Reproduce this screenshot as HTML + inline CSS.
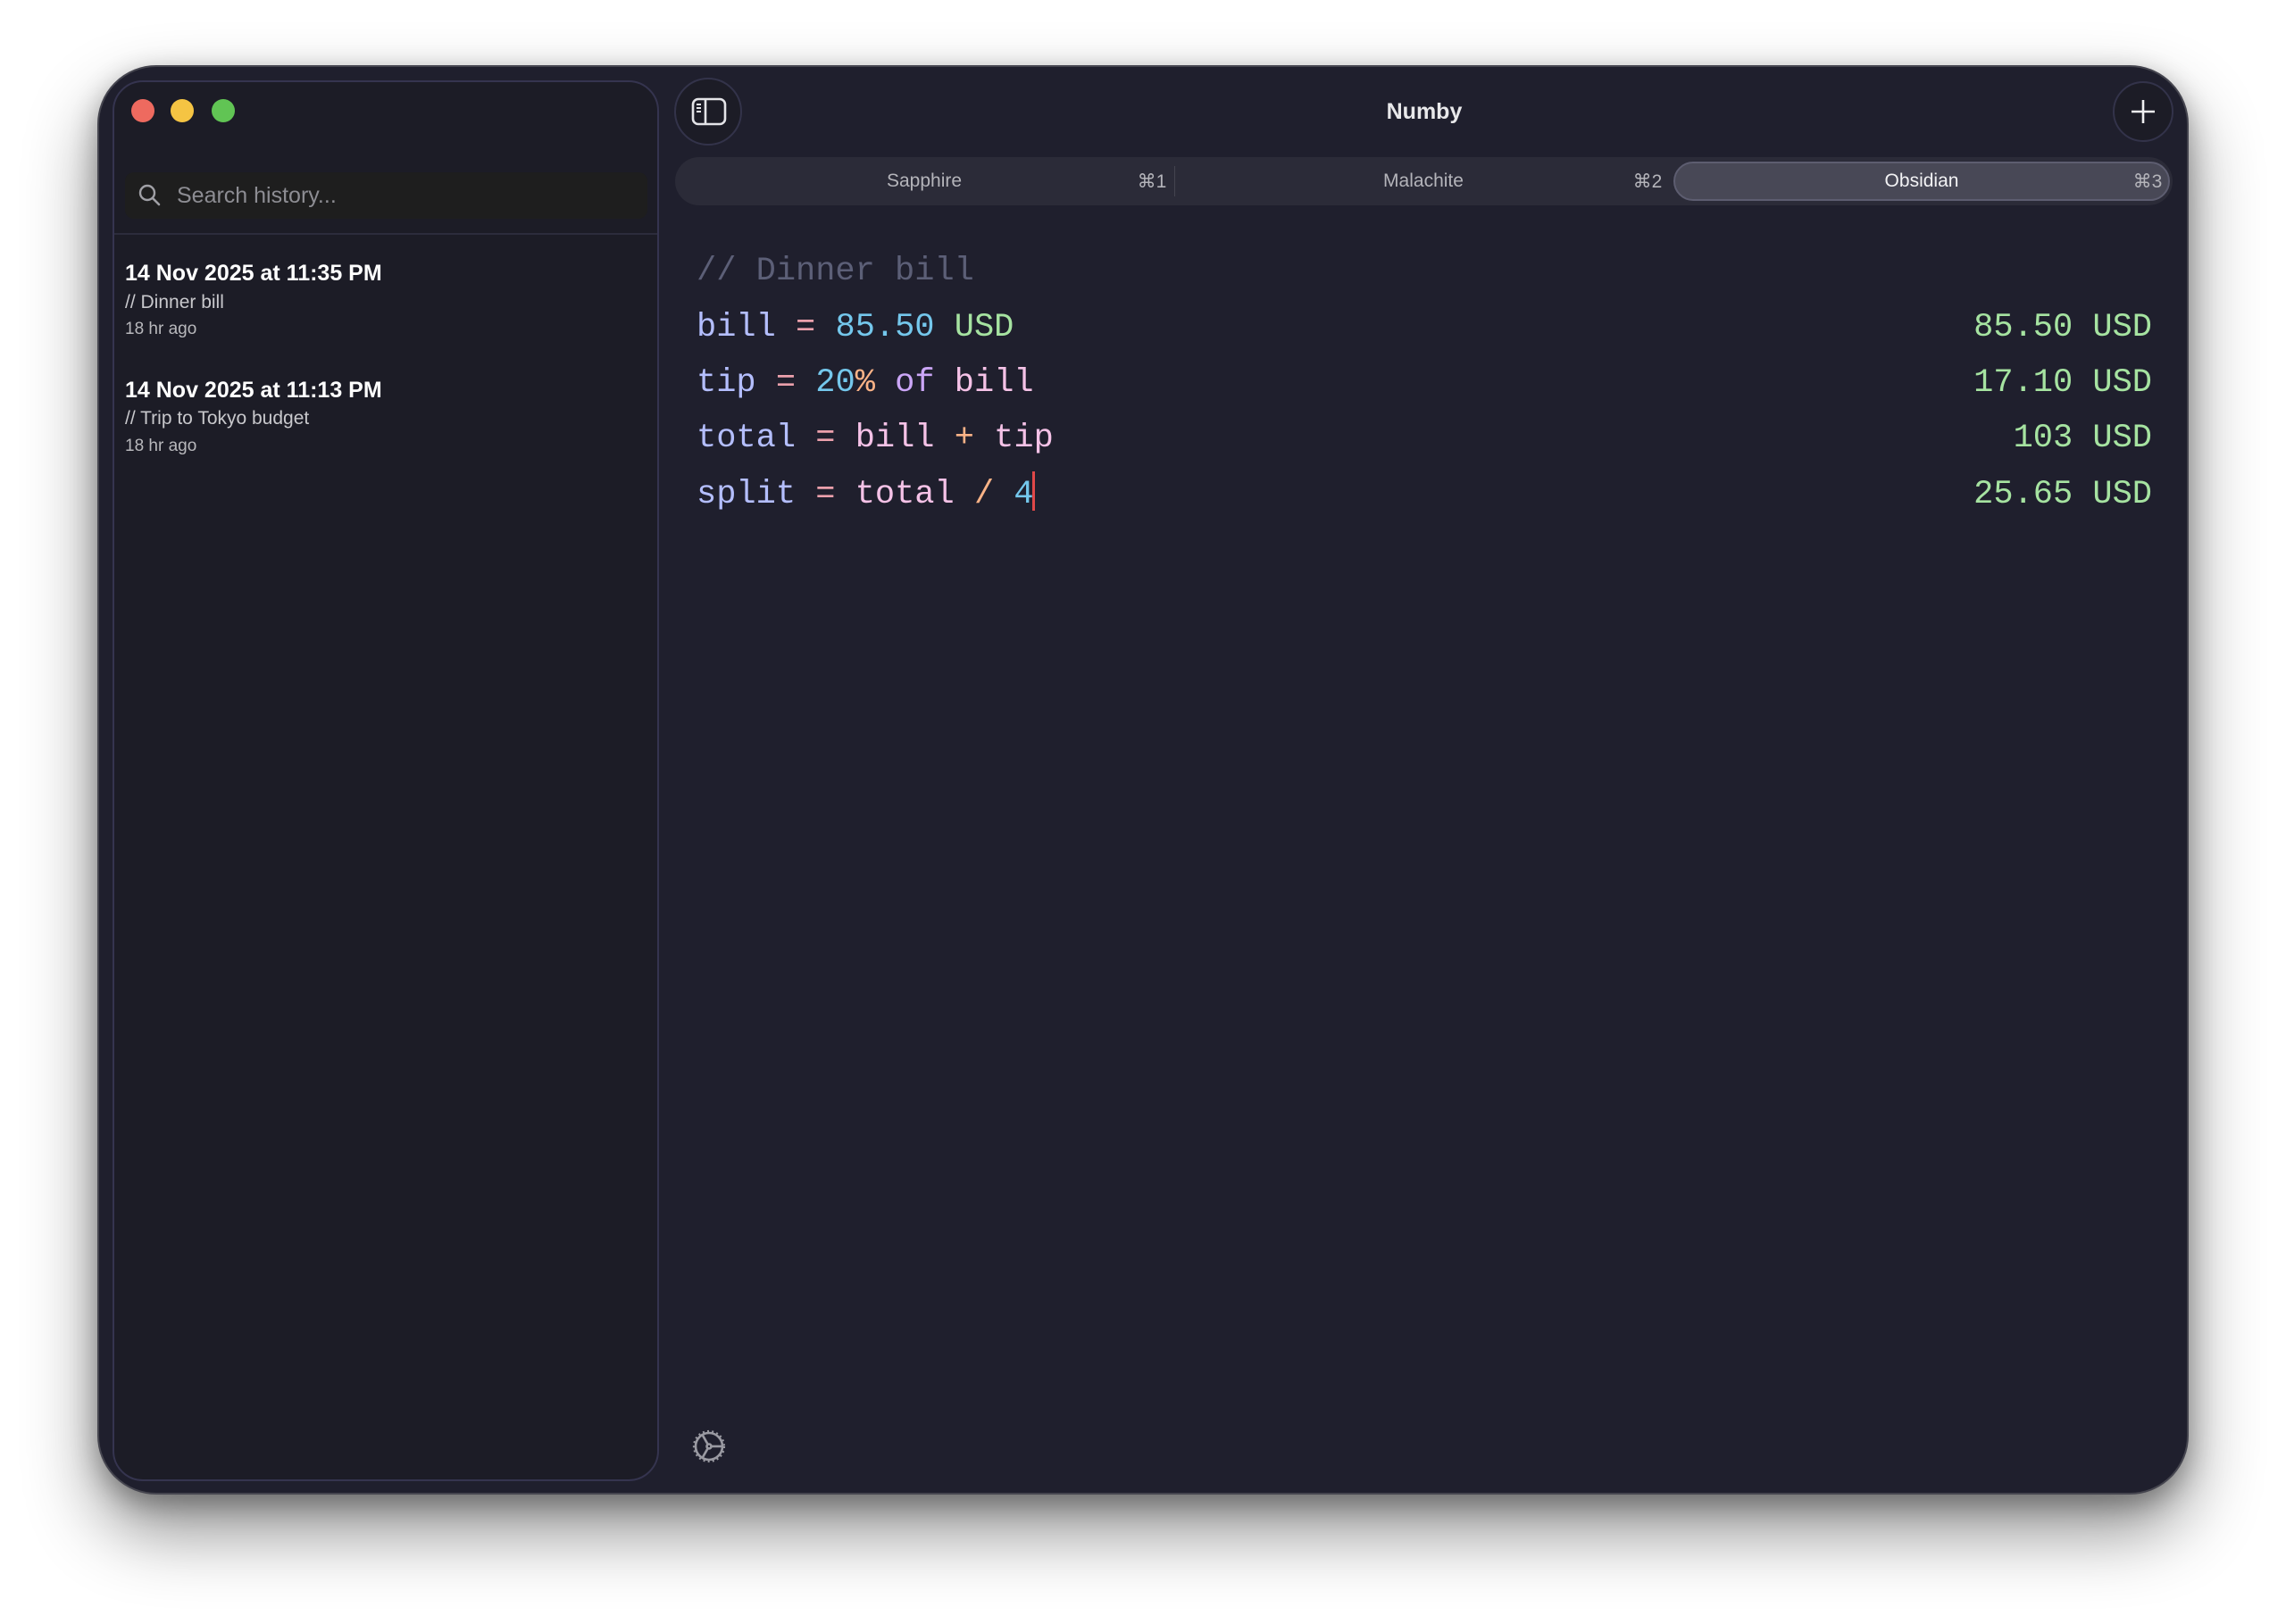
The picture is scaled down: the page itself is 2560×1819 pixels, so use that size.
<!DOCTYPE html>
<html><head><meta charset="utf-8"><style>
*{margin:0;padding:0;box-sizing:border-box}
body{width:2560px;height:1819px;background:#fff;position:relative;overflow:hidden;font-family:"Liberation Sans",sans-serif}
.win{position:absolute;left:109px;top:73px;width:2342px;height:1601px;border-radius:66px;background:#1f1f2d;border:2px solid #45454f;box-shadow:0 40px 80px rgba(0,0,0,.45),0 10px 30px rgba(0,0,0,.3)}
.side{position:absolute;left:126px;top:90px;width:612px;height:1569px;border-radius:34px;background:#1c1c26;border:2px solid #35344f}
.dot{position:absolute;top:111px;width:26px;height:26px;border-radius:50%}
.search{position:absolute;left:140px;top:193px;width:585px;height:52px;border-radius:10px;background:#1e1e1e}
.search span{position:absolute;left:58px;top:12px;font-size:25px;color:#8d8d93}
.hr{position:absolute;left:128px;top:261px;width:608px;height:2px;background:#2c2c3c}
.t{position:absolute;left:140px;color:#fff;font-weight:bold;font-size:25px}
.s{position:absolute;left:140px;color:#c8c8cc;font-size:21px}
.a{position:absolute;left:140px;color:#b8b8bc;font-size:19px}
.circ{position:absolute;border-radius:50%;background:#1c1c26;border:2px solid #33334a}
.title{position:absolute;left:1495px;width:200px;top:111px;text-align:center;color:#e8e8ea;font-size:25px;font-weight:bold}
.tabs{position:absolute;left:756px;top:176px;width:1677px;height:54px;border-radius:27px;background:#2b2b38}
.act{position:absolute;left:1874px;top:181px;width:556px;height:44px;border-radius:22px;background:#484856;border:2px solid #5d5d70}
.tl{position:absolute;top:191px;font-size:21px;color:#b4b4ba;transform:translateX(-50%)}
.code{position:absolute;left:780px;font-family:"Liberation Mono",monospace;font-size:37px;white-space:pre;line-height:1}
.r{position:absolute;right:150px;font-family:"Liberation Mono",monospace;font-size:37px;color:#a6e3a1;white-space:pre;line-height:1}
.v{color:#b4befe}.e{color:#eba0ac}.n{color:#74c7ec}.g{color:#a6e3a1}.o{color:#fab387}.m{color:#cba6f7}.p{color:#f5c2e7}.c{color:#5c5f77}
</style></head><body>
<div class="win"></div>
<div class="side"></div>
<div class="dot" style="left:147px;background:#ee6a5f"></div>
<div class="dot" style="left:191px;background:#f5c443"></div>
<div class="dot" style="left:237px;background:#61c454"></div>
<div class="search"><svg style="position:absolute;left:14px;top:12px" width="28" height="28" viewBox="0 0 28 28"><circle cx="11" cy="11" r="8" fill="none" stroke="#a0a0a6" stroke-width="2.4"/><line x1="17" y1="17" x2="24" y2="24" stroke="#a0a0a6" stroke-width="2.6" stroke-linecap="round"/></svg><span>Search history...</span></div>
<div class="hr"></div>
<div class="t" style="top:292px">14 Nov 2025 at 11:35 PM</div>
<div class="s" style="top:327px">// Dinner bill</div>
<div class="a" style="top:358px">18 hr ago</div>
<div class="t" style="top:423px">14 Nov 2025 at 11:13 PM</div>
<div class="s" style="top:457px">// Trip to Tokyo budget</div>
<div class="a" style="top:489px">18 hr ago</div>

<div class="circ" style="left:755px;top:87px;width:76px;height:76px"></div>
<svg style="position:absolute;left:774px;top:109px" width="40" height="32" viewBox="0 0 40 32"><rect x="2" y="2" width="36" height="28" rx="6" fill="none" stroke="#e4e4e8" stroke-width="2.6"/><line x1="16" y1="2" x2="16" y2="30" stroke="#e4e4e8" stroke-width="2.6"/><line x1="6" y1="8" x2="11" y2="8" stroke="#e4e4e8" stroke-width="2"/><line x1="6" y1="12" x2="11" y2="12" stroke="#e4e4e8" stroke-width="2"/><line x1="6" y1="16" x2="11" y2="16" stroke="#e4e4e8" stroke-width="2"/></svg>
<div class="title">Numby</div>
<div class="circ" style="left:2366px;top:91px;width:68px;height:68px"></div>
<svg style="position:absolute;left:2386px;top:111px" width="28" height="28" viewBox="0 0 28 28"><line x1="14" y1="1" x2="14" y2="27" stroke="#f0f0f2" stroke-width="2.6"/><line x1="1" y1="14" x2="27" y2="14" stroke="#f0f0f2" stroke-width="2.6"/></svg>

<div class="tabs"></div>
<div class="act"></div>
<div style="position:absolute;left:1315px;top:186px;width:1px;height:34px;background:#44444f"></div>
<div class="tl" style="left:1035px">Sapphire</div>
<div class="tl" style="left:1290px">⌘1</div>
<div class="tl" style="left:1594px">Malachite</div>
<div class="tl" style="left:1845px">⌘2</div>
<div class="tl" style="left:2152px;color:#f2f2f4">Obsidian</div>
<div class="tl" style="left:2405px">⌘3</div>

<div class="code c" style="top:286px">// Dinner bill</div>
<div class="code" style="top:349px"><span class="v">bill</span> <span class="e">=</span> <span class="n">85.50</span> <span class="g">USD</span></div>
<div class="code" style="top:411px"><span class="v">tip</span> <span class="e">=</span> <span class="n">20</span><span class="o">%</span> <span class="m">of</span> <span class="p">bill</span></div>
<div class="code" style="top:473px"><span class="v">total</span> <span class="e">=</span> <span class="p">bill</span> <span class="o">+</span> <span class="p">tip</span></div>
<div class="code" style="top:536px"><span class="v">split</span> <span class="e">=</span> <span class="p">total</span> <span class="o">/</span> <span class="n">4</span></div>
<div style="position:absolute;left:1156px;top:528px;width:3px;height:44px;background:#e04848"></div>
<div class="r" style="top:349px">85.50 USD</div>
<div class="r" style="top:411px">17.10 USD</div>
<div class="r" style="top:473px">103 USD</div>
<div class="r" style="top:536px">25.65 USD</div>

<svg style="position:absolute;left:774px;top:1600px" width="40" height="40" viewBox="0 0 40 40"><g stroke="#9a9aa2" fill="none" stroke-width="2.6"><circle cx="20" cy="20" r="15"/><circle cx="20" cy="20" r="2.5"/><line x1="22.5" y1="20" x2="35" y2="20"/><line x1="18.7" y1="17.8" x2="12.5" y2="7"/><line x1="18.7" y1="22.2" x2="12.5" y2="33"/></g><g stroke="#9a9aa2" stroke-width="2.2" stroke-dasharray="2 3.2"><circle cx="20" cy="20" r="17" fill="none"/></g></svg>
</body></html>
